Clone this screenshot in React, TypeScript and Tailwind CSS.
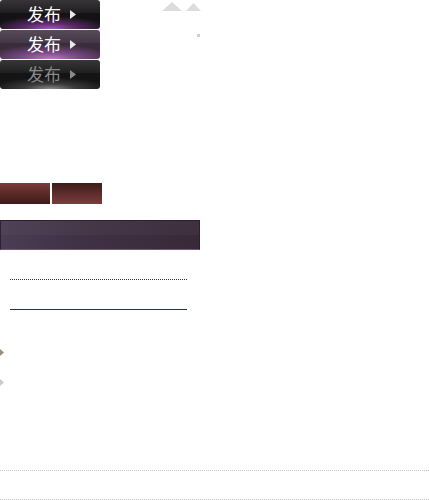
const font = "font-['Noto_Sans_CJK_SC','Noto_Sans',sans-serif]";

function Arrow({ color }: { color: string }) {
  return (
    <svg width="6" height="9" viewBox="0 0 6 9" className="ml-[9px] mt-px">
      <path d="M0 0 L6 4.5 L0 9 Z" fill={color} />
    </svg>
  );
}

function PublishButton({ variant }: { variant: "normal" | "hover" | "disabled" }) {
  const bg =
    variant === "normal"
      ? "bg-[radial-gradient(ellipse_60%_45%_at_50%_100%,#a05ab0_0%,#5a2a66_45%,#141214_100%)]"
      : variant === "hover"
        ? "bg-[radial-gradient(ellipse_65%_50%_at_50%_100%,#c276c6_0%,#7a4a86_45%,#3a2c3c_100%)]"
        : "bg-[radial-gradient(ellipse_60%_40%_at_50%_100%,#8a8a8a_0%,#3a3a3a_45%,#141414_100%)]";
  const text = variant === "disabled" ? "text-[#8a8a8a]" : "text-white";
  return (
    <div className={`relative w-[100px] h-[29px] rounded-[3px] overflow-hidden ${bg}`}>
      <div className="absolute left-0 right-0 top-0 h-[13px] bg-gradient-to-b from-white/15 to-white/5" />
      <div className={`relative flex h-full items-center pl-[27px] pb-[2px] ${text} ${font} text-[17px] leading-none`}>
        发布
        <Arrow color={variant === "disabled" ? "#8a8a8a" : "#e8e8e8"} />
      </div>
    </div>
  );
}

export default function App() {
  return (
    <div className="relative w-[429px] h-[500px] bg-white overflow-hidden">
      <div className="flex">
        <div className="flex flex-col gap-[1px] pt-0">
          <PublishButton variant="normal" />
          <PublishButton variant="hover" />
          <PublishButton variant="disabled" />
        </div>
        <div className="flex flex-col ml-[62px] pt-[2px]">
          <div className="flex gap-[4px]">
            <svg width="20" height="9" viewBox="0 0 20 9">
              <path d="M0 9 L10 0 L20 9 Z" fill="#dcdcdc" />
            </svg>
            <svg width="15" height="8" viewBox="0 0 15 8" className="mt-px">
              <path d="M0 8 L7.5 0 L15 8 Z" fill="#dcdcdc" />
            </svg>
          </div>
          <div className="ml-[35px] mt-[23px] w-[3px] h-[3px] bg-[#cfcfcf]" />
        </div>
      </div>

      <div className="flex gap-[2px] mt-[94px]">
        <div className="w-[50px] h-[21px] bg-gradient-to-b from-[#7a3c3c] to-[#3e1a18]" />
        <div className="w-[50px] h-[21px] bg-gradient-to-b from-[#3e1c18] to-[#7a3e3e]" />
      </div>

      <div className="relative mt-[16px] w-[200px] h-[30px] border border-[#2a2030] border-b-[#6c5a74] bg-gradient-to-r from-[#4a3c52] via-[#3e3042] to-[#382a38]">
        <div className="absolute inset-x-0 top-0 h-[14px] bg-white/[0.03]" />
      </div>

      <div className="ml-[10px] mt-[29px] w-[177px] border-t border-dotted border-[#1e3a3a]" />
      <div className="ml-[10px] mt-[29px] w-[177px] border-t border-[#1e3a3a]" />

      <svg width="4" height="7" viewBox="0 0 4 7" className="mt-[39px] block">
        <path d="M0 0 L4 3.5 L0 7 Z" fill="#9a907a" />
      </svg>
      <svg width="4" height="7" viewBox="0 0 4 7" className="mt-[23px] block">
        <path d="M0 0 L4 3.5 L0 7 Z" fill="#cccccc" />
      </svg>

      <div className="mt-[84px] w-full border-t border-dotted border-[#c8c8c8]" />
      <div className="mt-[28px] w-full border-t border-dotted border-[#c8c8c8]" />
    </div>
  );
}
